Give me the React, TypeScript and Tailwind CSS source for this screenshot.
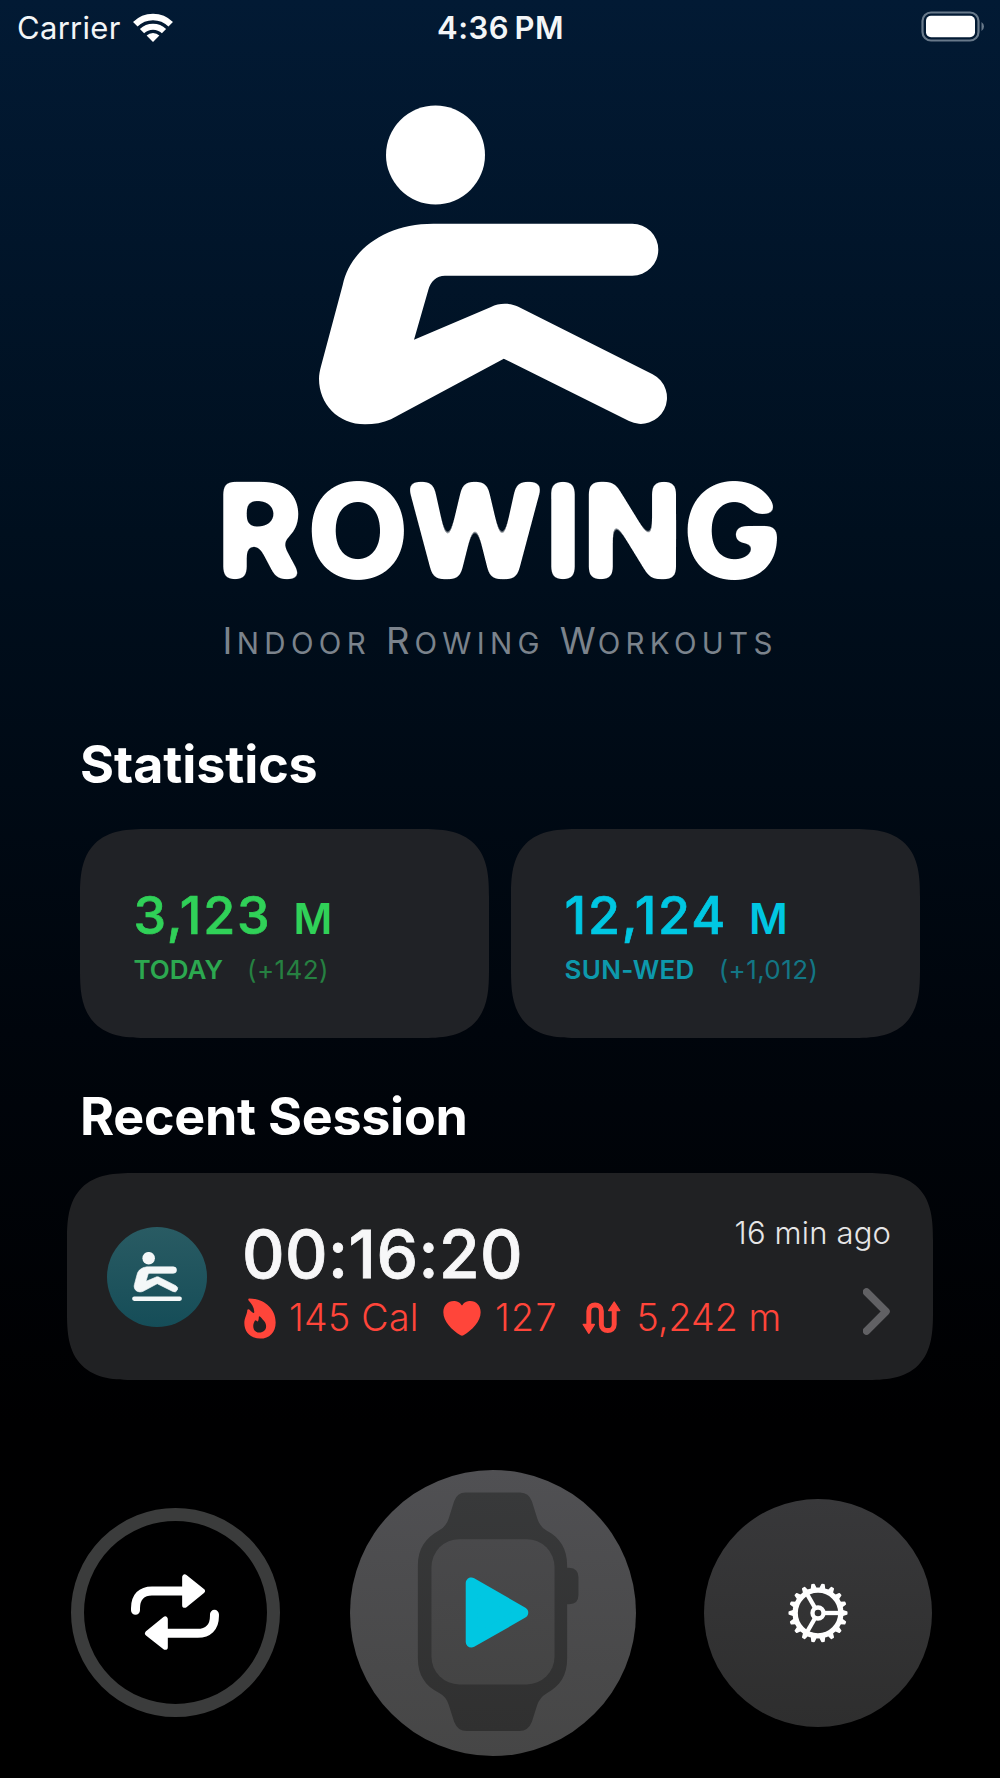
import React from "react";

const ROWER_BODY =
  "M433.3 223.7H632.3A26 26 0 0 1 632.3 275.7H445C436.5 275.7 430.5 281.5 428.3 290L414 339.7L491 307C499 302.7 510 302.7 518.3 306.7L652.6 374.3A26.2 26.2 0 0 1 629 421.1L503.8 358.7L391 419.3C383 423 374 424.3 365 424.3C338 424.3 319 404 319 378.7C319 374.5 319.8 370.8 321 366.2L342.7 285C350 250 385 223.7 433.3 223.7Z";

function RowerFigure() {
  return (
    <svg className="mx-auto mt-[46px] block h-[330px] w-[400px] shrink-0" viewBox="300 100 400 330" fill="#fff">
      <circle cx="435.5" cy="154.9" r="49.5" />
      <path d={ROWER_BODY} />
    </svg>
  );
}

function Wordmark() {
  return (
    <svg className="mx-auto mt-10 block h-[120px] w-[600px] shrink-0 overflow-visible" viewBox="200 470 600 120">
      <defs>
        <filter id="soften-corners" x="200" y="460" width="600" height="140" filterUnits="userSpaceOnUse">
          <feGaussianBlur stdDeviation="5.5" />
          <feColorMatrix values="1 0 0 0 0 0 1 0 0 0 0 0 1 0 0 0 0 0 14 -6.3" />
        </filter>
      </defs>
      <text
        x="260 358 475 563 632.5 732.5"
        y="579"
        textAnchor="middle"
        fontSize="133"
        fontWeight="830"
        fill="#fff"
        filter="url(#soften-corners)"
      >
        ROWING
      </text>
    </svg>
  );
}

function RowerBadge() {
  return (
    <div className="flex size-[100px] shrink-0 items-center justify-center rounded-full bg-linear-to-b from-[#295b63] to-[#154d58]">
      <svg className="h-[49px] w-[50px]" viewBox="303 105 398 392" fill="#f4f7f8">
        <circle cx="435.3" cy="154.7" r="50" />
        <path d={ROWER_BODY} stroke="#f4f7f8" strokeWidth="5" />
        <rect x="303" y="461" width="398" height="35" rx="17" />
      </svg>
    </div>
  );
}

function StatusBar() {
  return (
    <div className="grid h-[54px] shrink-0 grid-cols-3 items-center pr-4 pl-[17px] text-[#f3f5f7]">
      <div className="flex items-center gap-3">
        <span className="text-[31px] leading-none tracking-[0.3px]">Carrier</span>
        <svg className="h-[29px] w-10" viewBox="0 0 40 29" fill="none" stroke="#fff">
          <path d="M2.3 11.3A25 25 0 0 1 37.7 11.3" strokeWidth="6.4" />
          <path d="M9 18.2A15.6 15.6 0 0 1 31 18.2" strokeWidth="6" />
          <path d="M20 29L13.6 22.6A9 9 0 0 1 26.4 22.6Z" fill="#fff" stroke="none" />
        </svg>
      </div>
      <div className="text-center text-[31px] leading-none font-semibold tracking-[0.5px] [word-spacing:-3px]">4:36 PM</div>
      <svg className="ml-auto h-8 w-[63px]" viewBox="0 0 63 32" fill="none">
        <rect x="1.5" y="1.5" width="56" height="28" rx="8.5" stroke="#68798a" strokeWidth="2.2" />
        <rect x="5" y="4.8" width="49" height="21.5" rx="5" fill="#fff" />
        <path d="M60.5 11V20Q63 18.5 63 15.5T60.5 11Z" fill="#68798a" />
      </svg>
    </div>
  );
}

function Subtitle() {
  return (
    <div className="mt-[30.5px] flex h-10 shrink-0 items-baseline gap-[15px] pl-[222.5px] text-[29.5px] leading-10 tracking-[5.3px] text-[#7b838c]">
      <span>
        <span className="text-[36.5px] tracking-[4.5px]">I</span>NDOOR
      </span>
      <span>
        <span className="text-[36.5px] tracking-[5px]">R</span>OWING
      </span>
      <span>
        <span className="text-[36.5px] tracking-[2px]">W</span>ORKOUTS
      </span>
    </div>
  );
}

interface StatCardProps {
  value: string;
  label: string;
  delta: string;
  valueClass: string;
  labelClass: string;
  deltaClass: string;
}

function StatCard({ value, label, delta, valueClass, labelClass, deltaClass }: StatCardProps) {
  return (
    <div className="h-[209px] rounded-[68px] bg-[#202226] pt-[60.5px] pl-[53.5px] whitespace-nowrap [corner-shape:superellipse(1.5)]">
      <div className={`flex items-baseline leading-none ${valueClass}`}>
        <span className="text-[52px] leading-none font-medium tracking-[1.8px] [-webkit-text-stroke:0.7px]">{value}</span>
        <span className="ml-[22px] text-[42px] leading-none font-semibold">M</span>
      </div>
      <div className="mt-[15.5px] flex items-baseline gap-6 text-[26px] leading-none">
        <span className={`font-semibold ${labelClass}`}>{label}</span>
        <span className={`tracking-[0.4px] ${deltaClass}`}>{delta}</span>
      </div>
    </div>
  );
}

function FlameIcon() {
  return (
    <svg className="h-[41px] w-8 shrink-0" viewBox="41 32.5 97 123.5" fill="#ff453a" fillRule="evenodd">
      <path d="M57 33.5C95 33.5 137 60 137 106C137 136 118 155 90 155C60 155 42 135 42 108C42 92 50 84 51 69Q52 64 57 67Q62 73 68 77Q73 79 72 73C71 60 64 50 55 40Q52 34.5 57 33.5ZM86 89Q88 86 91 90C99 99 108 106 108 118C108 130 99 137 88 137C76 137 69 129 69 117C69 110 72 105 74 101Q76 98 79 101Q82 105 84 102Q86 96 86 89Z" />
    </svg>
  );
}

function HeartIcon() {
  return (
    <svg className="h-[35px] w-[38px] shrink-0" viewBox="0 0 113 106" fill="#ff453a">
      <path d="M56.5 14C50 3 40 0 32 0C13 0 0 14 0 34C0 62 26 88 52 104Q56.5 107 61 104C87 88 113 62 113 34C113 14 100 0 81 0C73 0 63 3 56.5 14Z" />
    </svg>
  );
}

function RouteIcon() {
  return (
    <svg className="h-[33.3px] w-[38.7px] shrink-0" viewBox="278 420 116 101" fill="none">
      <path d="M298 492V450C298 426 336 426 336 450V491C336 516 375 516 375 491V446" stroke="#ff453a" strokeWidth="15" />
      <path d="M281 491H315L298 518Z M358 449H392L375 423Z" fill="#ff453a" stroke="#ff453a" strokeWidth="4" strokeLinejoin="round" />
    </svg>
  );
}

function SessionCard() {
  return (
    <div className="mx-[67px] mt-[30px] flex h-[207px] shrink-0 rounded-[68px] bg-[#202123] pr-[42px] pl-10 whitespace-nowrap [corner-shape:superellipse(1.5)]">
      <div className="flex items-center">
        <RowerBadge />
      </div>
      <div className="ml-[35px] w-0 pt-[48px]">
        <div className="text-[66px] leading-none font-medium tracking-[0.45px] text-[#f7f7f8] [-webkit-text-stroke:0.8px]">00:16:20</div>
        <div className="mt-[12px] flex h-[38px] w-max items-center pl-[2px] text-[37.5px] leading-none font-light text-[#ff453a]">
          <FlameIcon />
          <span className="ml-[13px] tracking-[0.3px]">145 Cal</span>
          <span className="ml-[24.5px] flex">
            <HeartIcon />
          </span>
          <span className="ml-[13.5px] tracking-[1.4px]">127</span>
          <span className="ml-[24.5px] flex">
            <RouteIcon />
          </span>
          <span className="ml-[15.5px] tracking-[0.1px]">5,242 m</span>
        </div>
      </div>
      <div className="ml-auto flex flex-col items-end pt-[44px]">
        <div className="text-[31px] leading-none font-light tracking-[0.15px] text-[#e6e6e7]">16 min ago</div>
        <svg className="mt-10 h-[47px] w-[28px]" viewBox="0 0 28 47" fill="none">
          <path d="M3.5 4L23 23.5L3.5 43" stroke="#616164" strokeWidth="7.5" strokeLinecap="round" strokeLinejoin="round" />
        </svg>
      </div>
    </div>
  );
}

function RepeatIcon() {
  return (
    <svg className="h-[77.3px] w-[89.3px]" viewBox="242 282 268 232" fill="none" stroke="#fff">
      <path d="M255.5 391V385C255.5 350 274 333 305 333H402M492.5 403V408C492.5 443 473 460 442 460H346" strokeWidth="27" strokeLinecap="round" />
      <path d="M403.5 291.5V375.5L456 333ZM344.5 417.5V501.5L292 460Z" fill="#fff" strokeWidth="16" strokeLinejoin="round" />
    </svg>
  );
}

function WatchIcon() {
  return (
    <svg className="size-[286px]" viewBox="58 58 860 860">
      <defs>
        <linearGradient id="strap" x1="0" y1="0" x2="0" y2="1">
          <stop offset="0" stopColor="#38393a" />
          <stop offset="1" stopColor="#303030" />
        </linearGradient>
        <linearGradient id="screen" x1="0" y1="0" x2="0" y2="1">
          <stop offset="0" stopColor="#49494b" />
          <stop offset="1" stopColor="#444444" />
        </linearGradient>
      </defs>
      <path
        fill="url(#strap)"
        d="M405 126H570Q596 127 605 152L621 203Q628 228 650 241C690 262 711 295 711 345V352H718Q745 354 745 380V434Q745 461 718 462H711V625C711 675 690 708 650 729Q628 742 621 765L605 815Q594 843 568 843H408Q382 843 371 815L355 765Q348 740 325 728C285 708 262 675 262 625V345C262 295 285 262 325 240Q348 228 355 203L371 152Q380 126 405 126Z"
      />
      <rect x="303" y="266" width="370" height="437" rx="84" fill="url(#screen)" />
      <path d="M423 398V575L577 487Z" fill="#00c7e2" stroke="#00c7e2" strokeWidth="34" strokeLinejoin="round" />
    </svg>
  );
}

const TEETH = Array.from({ length: 18 }, (_, i) => i * 20);

function GearIcon() {
  return (
    <svg className="size-[60px]" viewBox="-90 -90 180 180" fill="none" stroke="#fff">
      <circle r="68.5" strokeWidth="16" />
      <circle r="16.5" strokeWidth="13" />
      {[0, 120, 240].map((a) => (
        <path key={a} d="M20 0H64" strokeWidth="13" transform={`rotate(${a})`} />
      ))}
      {TEETH.map((a) => (
        <path key={a} d="M72 -7L86 -3V3L72 7Z" fill="#fff" strokeWidth="5" strokeLinejoin="round" transform={`rotate(${a})`} />
      ))}
    </svg>
  );
}

export default function App() {
  return (
    <div className="flex h-[1778px] w-[1000px] flex-col overflow-hidden bg-[linear-gradient(180deg,#021a34_0%,#000f1e_30%,#00050c_58%,#000001_80%,#000_100%)] font-['Inter',sans-serif]">
      <StatusBar />
      <RowerFigure />
      <Wordmark />
      <Subtitle />
      <h2 className="mt-[78.5px] pl-20 text-[52px] leading-none font-bold tracking-[-0.1px] text-white">Statistics</h2>
      <div className="mx-20 mt-[38px] grid shrink-0 grid-cols-2 gap-[22px]">
        <StatCard value="3,123" label="TODAY" delta="(+142)" valueClass="text-[#30d158]" labelClass="text-[#2ca850] tracking-[0px]" deltaClass="text-[#268041]" />
        <StatCard value="12,124" label="SUN-WED" delta="(+1,012)" valueClass="text-[#00c7e2]" labelClass="text-[#0d99ac] tracking-[0.3px]" deltaClass="text-[#137685]" />
      </div>
      <h2 className="mt-[53px] pl-20 text-[52px] leading-none font-bold tracking-[-0.27px] text-white">Recent Session</h2>
      <SessionCard />
      <div className="mt-[89.5px] flex shrink-0 items-center pl-[71px]">
        <button className="flex size-[209px] items-center justify-center rounded-full border-[13px] border-[#3b3c3c]">
          <RepeatIcon />
        </button>
        <button className="ml-[69.5px] rounded-full bg-linear-to-b from-[#505053] to-[#464646]">
          <WatchIcon />
        </button>
        <button className="ml-[68.5px] flex size-[228px] items-center justify-center rounded-full bg-linear-to-b from-[#38383a] to-[#2e2e2e]">
          <GearIcon />
        </button>
      </div>
    </div>
  );
}
